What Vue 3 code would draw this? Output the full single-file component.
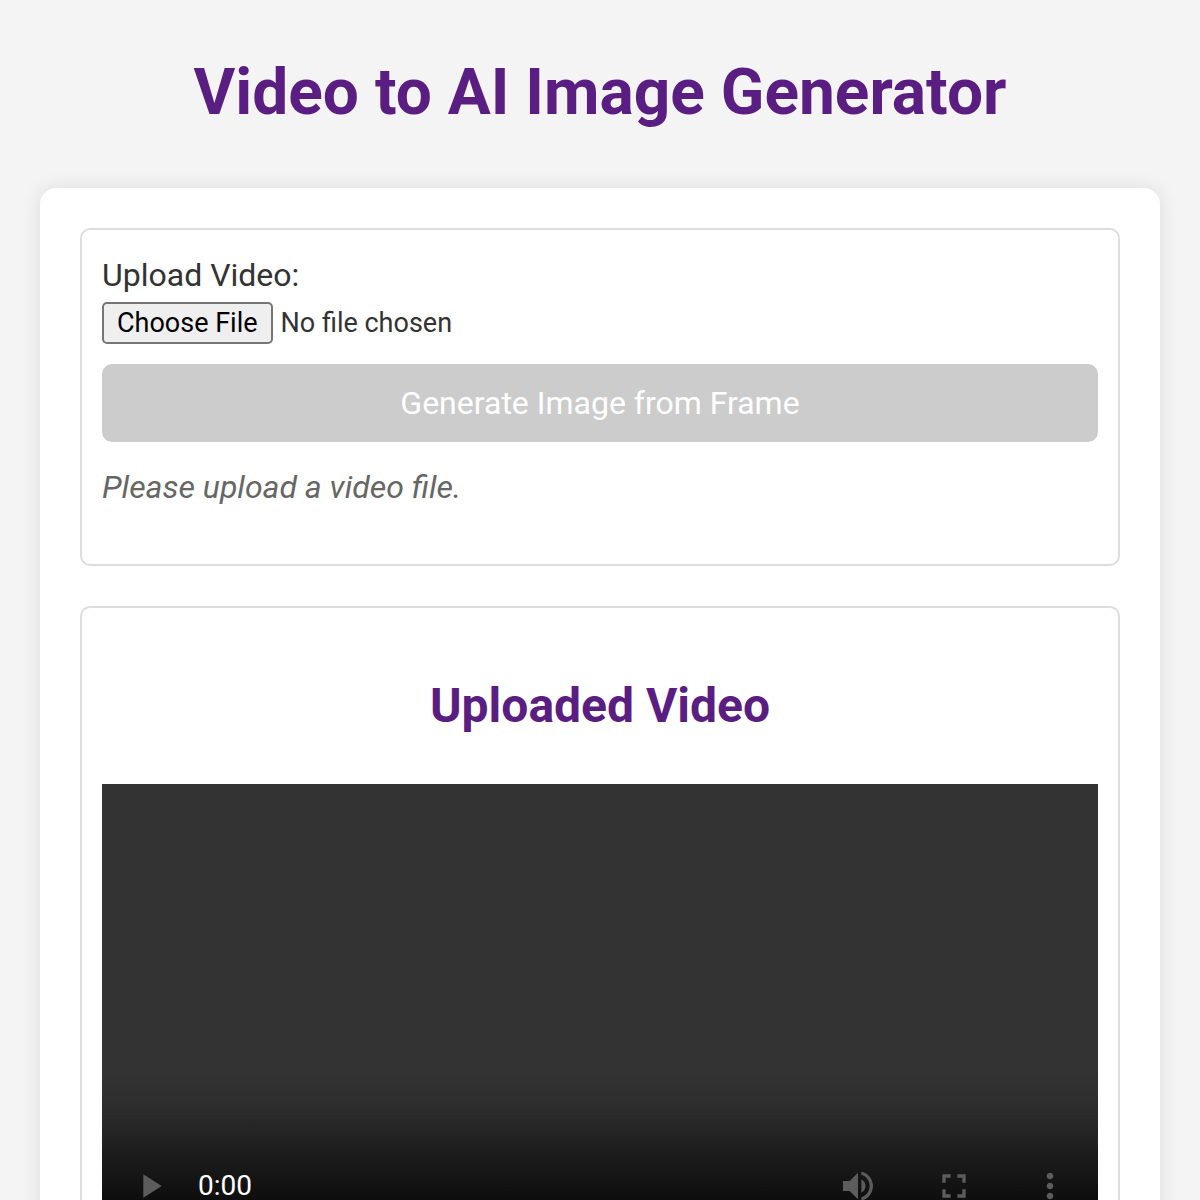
<script setup>
import { ref } from 'vue'

const status = ref('Please upload a video file.')
const hasVideo = ref(false)
const position = ref(0)

function onFile(event) {
  hasVideo.value = event.target.files.length > 0
  status.value = hasVideo.value ? 'Video loaded.' : 'Please upload a video file.'
}
</script>

<template>
  <main class="page">
    <h1>Video to AI Image Generator</h1>

    <div class="container">
      <section class="panel controls">
        <label for="video-upload">Upload Video:</label>
        <input id="video-upload" type="file" accept="video/*" @change="onFile" />
        <button class="generate" type="button" :disabled="!hasVideo">Generate Image from Frame</button>
        <p class="status">{{ status }}</p>
      </section>

      <section class="panel">
        <h2>Uploaded Video</h2>
        <div class="player">
          <div class="bar">
            <button type="button" aria-label="Play" disabled>
              <svg viewBox="0 0 24 24"><path d="M8 5v14l11-7z" /></svg>
            </button>
            <span class="time">0:00</span>
            <button type="button" aria-label="Mute" disabled>
              <svg viewBox="0 0 24 24">
                <path d="M3 9v6h4l5 5V4L7 9H3zm13.5 3c0-1.77-1.02-3.29-2.5-4.03v8.05c1.48-.73 2.5-2.25 2.5-4.02zM14 3.23v2.06c2.89.86 5 3.54 5 6.71s-2.11 5.85-5 6.71v2.06c4.01-.91 7-4.49 7-8.77s-2.99-7.86-7-8.77z" />
              </svg>
            </button>
            <button type="button" aria-label="Full screen" disabled>
              <svg viewBox="0 0 24 24">
                <path d="M7 14H5v5h5v-2H7v-3zm-2-4h2V7h3V5H5v5zm12 7h-3v2h5v-5h-2v3zM14 5v2h3v3h2V5h-5z" />
              </svg>
            </button>
            <button type="button" aria-label="More options" disabled>
              <svg viewBox="0 0 24 24">
                <path d="M12 8c1.1 0 2-.9 2-2s-.9-2-2-2-2 .9-2 2 .9 2 2 2zm0 2c-1.1 0-2 .9-2 2s.9 2 2 2 2-.9 2-2-.9-2-2-2zm0 6c-1.1 0-2 .9-2 2s.9 2 2 2 2-.9 2-2-.9-2-2-2z" />
              </svg>
            </button>
          </div>
          <input v-model="position" class="timeline" type="range" min="0" max="100" aria-label="Video position" disabled />
        </div>
      </section>
    </div>
  </main>
</template>

<style>
body {
  margin: 0;
  background: #f4f4f4;
}
</style>

<style scoped>
.page {
  padding: 40px;
  color: #333;
  font-family: Roboto, sans-serif;
  font-size: 32px;
  line-height: 51px;
}

h1,
h2 {
  color: #5a1e82;
  font-weight: 700;
  text-align: center;
}

h1 {
  margin: 0 0 42px;
  font-size: 64px;
  line-height: 106px;
}

h2 {
  margin: 40px 0;
  font-size: 48px;
  line-height: 76px;
}

.container {
  display: flex;
  flex-direction: column;
  gap: 40px;
  padding: 40px;
  border-radius: 16px;
  background: #fff;
  box-shadow: 0 0 20px rgba(0, 0, 0, 0.1);
}

.panel {
  display: flex;
  flex-direction: column;
  padding: 20px;
  border: 2px solid #ddd;
  border-radius: 10px;
}

input[type='file'] {
  height: 42px;
  margin: 1px 0 20px;
  color: #333;
  font-family: inherit;
  font-size: 27px;
  line-height: 32px;
}

input[type='file']::file-selector-button {
  height: 42px;
  margin: 0 8px 0 0;
  padding: 2px 13px;
  border: 2px solid #767676;
  border-radius: 5px;
  background: #efefef;
  color: #000;
  font: inherit;
}

.generate {
  padding: 20px;
  border: 0;
  border-radius: 10px;
  background: #5a1e82;
  color: #fff;
  font-family: inherit;
  font-size: 32px;
  line-height: 38px;
}

.generate:disabled {
  background: #ccc;
}

.status {
  margin: 20px 0 31px;
  color: #666;
  font-style: italic;
}

.player {
  display: flex;
  flex-direction: column;
  justify-content: flex-end;
  aspect-ratio: 2;
  background: linear-gradient(#333 0, #333 58%, #2d2d2d 65%, #1d1d1d 74%, #0d0d0d 84%, #000 100%);
}

.bar {
  display: flex;
  align-items: center;
  height: 96px;
}

.bar button {
  display: flex;
  flex: 0 0 96px;
  align-items: center;
  justify-content: center;
  height: 96px;
  padding: 0;
  border: 0;
  background: none;
}

.bar svg {
  width: 40px;
  height: 40px;
  fill: #5c5c5c;
}

.time {
  flex: 1;
  color: #fff;
  font-size: 28px;
  line-height: 26px;
}

.timeline {
  height: 4px;
  margin: 10px 32px 34px;
  border-radius: 2px;
  background: #444;
  appearance: none;
}

.timeline::-webkit-slider-thumb {
  width: 0;
  appearance: none;
}
</style>
